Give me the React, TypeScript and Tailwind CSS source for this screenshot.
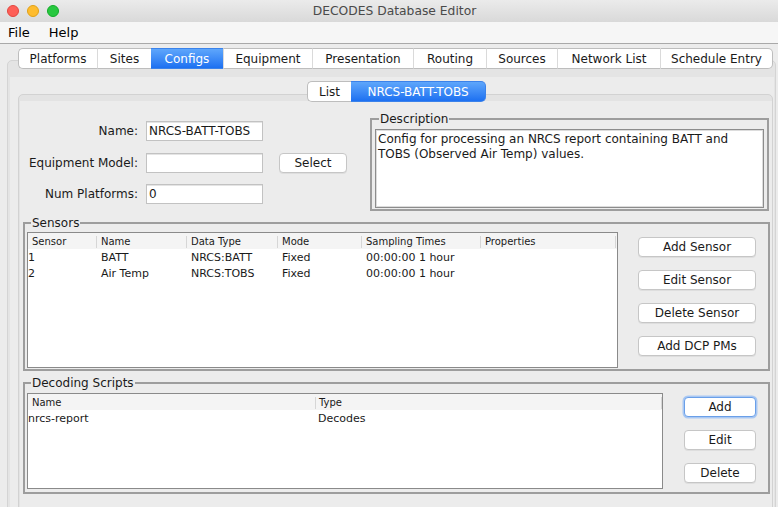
import React from 'react';

// DECODES Database Editor – Configs tab (macOS Aqua look)

const mainTabs = [
  { label: 'Platforms', w: 'w-[79px]' },
  { label: 'Sites', w: 'w-[54px]' },
  { label: 'Configs', w: 'w-[72px]', active: true },
  { label: 'Equipment', w: 'w-[89px]' },
  { label: 'Presentation', w: 'w-[101px]' },
  { label: 'Routing', w: 'w-[73px]' },
  { label: 'Sources', w: 'w-[71px]' },
  { label: 'Network List', w: 'w-[103px]' },
  { label: 'Schedule Entry', w: 'w-[113px]' },
];

const sensorCols = [
  { label: 'Sensor', w: 'w-[68px]' },
  { label: 'Name', w: 'w-[90px]' },
  { label: 'Data Type', w: 'w-[91px]' },
  { label: 'Mode', w: 'w-[84px]' },
  { label: 'Sampling Times', w: 'w-[119px]' },
  { label: 'Properties', w: 'w-[136px]' },
];

const sensors = [
  ['1', 'BATT', 'NRCS:BATT', 'Fixed', '00:00:00 1 hour', ''],
  ['2', 'Air Temp', 'NRCS:TOBS', 'Fixed', '00:00:00 1 hour', ''],
];

function Tab({ label, w, active, first, last }: { label: string; w: string; active?: boolean; first?: boolean; last?: boolean }) {
  return (
    <div
      className={[
        'flex h-full items-center justify-center text-[12px] leading-none border-y',
        w,
        active
          ? 'bg-gradient-to-b from-[#5ea6fb] to-[#1c70f1] text-white border-[#3b82ea]'
          : 'bg-white text-[#1a1a1a] border-[#bdbdbd]',
        first ? 'rounded-l-[5px] border-l' : '',
        last ? 'rounded-r-[5px] border-r' : '',
        !first && !active ? 'border-l border-l-[#dadada]' : '',
      ].join(' ')}
    >
      {label}
    </div>
  );
}

function MacButton({ children, w, focused }: { children: React.ReactNode; w: string; focused?: boolean }) {
  return (
    <button
      className={[
        'flex h-[20px] items-center justify-center rounded-[4px] bg-white text-[12px] leading-none text-[#1a1a1a]',
        w,
        focused
          ? 'border border-[#6a9fe8] shadow-[0_0_0_1.5px_#a9c8f3]'
          : 'border border-[#c6c6c6] shadow-[0_1px_0_rgba(0,0,0,0.06)]',
      ].join(' ')}
    >
      {children}
    </button>
  );
}

function FormRow({ label, value, children, mb }: { label: string; value: string; children?: React.ReactNode; mb: string }) {
  return (
    <div className={`flex h-[20px] items-center ${mb}`}>
      <div className="w-[115px] text-right text-[12px] text-[#1a1a1a]">{label}</div>
      <div className="ml-[8px] flex h-[20px] w-[117px] items-center border border-[#c2c2c2] bg-white pl-[2px] text-[12px] text-[#1a1a1a] shadow-[inset_0_1px_0_#e4e4e4]">
        {value}
      </div>
      {children}
    </div>
  );
}

function Group({ title, className, children }: { title: string; className: string; children: React.ReactNode }) {
  return (
    <fieldset className={`border-2 border-[#9d9d9d] ${className}`}>
      <legend className="ml-[4px] px-[1px] text-[12px] leading-[14px] text-[#1a1a1a]">{title}</legend>
      {children}
    </fieldset>
  );
}

export default function App() {
  return (
    <div className="flex h-[507px] w-[778px] flex-col overflow-hidden bg-[#ececec] font-['DejaVu_Sans',sans-serif] text-[#1a1a1a]">
      {/* Title bar */}
      <div className="relative flex h-[22px] shrink-0 items-center bg-gradient-to-b from-[#ebebeb] to-[#d9d9d9]">
        <div className="flex items-center gap-[8px] pl-[7px]">
          <span className="h-[12px] w-[12px] rounded-full border border-[#e2463f] bg-[#fe5f57]" />
          <span className="h-[12px] w-[12px] rounded-full border border-[#e1a116] bg-[#febc2e]" />
          <span className="h-[12px] w-[12px] rounded-full border border-[#12ac28] bg-[#28c840]" />
        </div>
        <div className="flex-1 pr-[48px] text-center text-[12.3px] text-[#4a4a4a]">DECODES Database Editor</div>
      </div>

      {/* Menu bar */}
      <div className="flex h-[22px] shrink-0 items-center gap-[19px] border-b border-[#a9a9a9] bg-[#f6f6f6] px-[8px] text-[13px] text-black">
        <span>File</span>
        <span>Help</span>
      </div>

      {/* Main tabbed pane */}
      <div className="flex-1 overflow-hidden pl-[7px] pr-[2px] pt-[4px]">
        <div className="relative z-10 ml-[11px] flex h-[21px] w-[755px]">
          {mainTabs.map((t, i) => (
            <Tab key={t.label} {...t} first={i === 0} last={i === mainTabs.length - 1} />
          ))}
        </div>
        <div className="-mt-[9px] h-[600px] rounded-[5px] border border-[#d4d4d4] bg-[#e4e4e4] pl-[2px] pr-[1px] pt-[16px]">
          <div className="h-full bg-[#ececec] pl-[8px] pt-[4px]">
            <div className="w-[755px]">
              {/* Sub tabs */}
              <div className="relative z-10 flex h-[21px] justify-center pl-[2px]">
                <Tab label="List" w="w-[44px]" first />
                <Tab label="NRCS-BATT-TOBS" w="w-[135px]" active last />
              </div>

              {/* Inner pane */}
              <div className="-mt-[8px] h-[600px] rounded-[5px] border border-[#d2d2d2] bg-[#e3e3e3] pl-[1px] pt-[6px]">
                <div className="h-full bg-[#ececec] pl-[3px] pr-[2px] pt-[11px]">
                  {/* Top section */}
                  <div className="flex items-start">
                    <div className="w-[347px] pt-[9px]">
                      <FormRow label="Name:" value="NRCS-BATT-TOBS" mb="mb-[12px]" />
                      <FormRow label="Equipment Model:" value="" mb="mb-[11px]">
                        <div className="ml-[16px]">
                          <MacButton w="w-[68px]">Select</MacButton>
                        </div>
                      </FormRow>
                      <FormRow label="Num Platforms:" value="0" mb="" />
                    </div>
                    <Group title="Description" className="flex h-[99px] w-[399px] flex-col px-[3px] pb-[1px]">
                      <div className="mt-[3px] flex-1 border border-[#8c8c8c] bg-white pl-[2px] pt-[2px] text-[12px] leading-[15px] shadow-[inset_0_0_0_1px_#dcdcdc]">
                        <div className="whitespace-nowrap">Config for processing an NRCS report containing BATT and</div>
                        <div className="whitespace-nowrap">TOBS (Observed Air Temp) values.</div>
                      </div>
                    </Group>
                  </div>

                  {/* Sensors */}
                  <Group title="Sensors" className="mt-[5px] flex h-[155px] w-[747px] pb-[1px] pl-[2px] pr-[12px]">
                    <div className="mt-[2px] flex w-full">
                      <div className="h-[136px] w-[591px] border border-[#8a8a8a] bg-white">
                        <div className="flex h-[16px] items-end bg-[#f4f4f4] pb-[1px]">
                          {sensorCols.map((c, i) => (
                            <div
                              key={c.label}
                              className={`flex h-[12px] items-center text-[10px] leading-none ${c.w} ${i === 0 ? 'pl-[4px]' : 'border-l border-[#d6d6d6] pl-[4px]'} ${i === sensorCols.length - 1 ? 'border-r' : ''}`}
                            >
                              {c.label}
                            </div>
                          ))}
                        </div>
                        {sensors.map((row) => (
                          <div key={row[0]} className="flex h-[16px] items-center text-[11px] leading-none">
                            {row.map((cell, i) => (
                              <div key={i} className={`${sensorCols[i].w} whitespace-nowrap ${i === 0 ? '' : 'pl-[5px]'}`}>
                                {cell}
                              </div>
                            ))}
                          </div>
                        ))}
                      </div>
                      <div className="ml-[20px] flex flex-col gap-[13px] pt-[5px]">
                        <MacButton w="w-[118px]">Add Sensor</MacButton>
                        <MacButton w="w-[118px]">Edit Sensor</MacButton>
                        <MacButton w="w-[118px]">Delete Sensor</MacButton>
                        <MacButton w="w-[118px]">Add DCP PMs</MacButton>
                      </div>
                    </div>
                  </Group>

                  {/* Decoding Scripts */}
                  <Group title="Decoding Scripts" className="mt-[5px] flex h-[118px] w-[747px] pb-[3px] pl-[2px] pr-[12px]">
                    <div className="mt-[3px] flex w-full">
                      <div className="h-[96px] w-[636px] border border-[#8a8a8a] bg-white">
                        <div className="flex h-[16px] items-end bg-[#f4f4f4] pb-[1px]">
                          <div className="flex h-[12px] w-[287px] items-center pl-[4px] text-[10px] leading-none">Name</div>
                          <div className="flex h-[12px] w-[347px] items-center border-x border-[#d6d6d6] pl-[3px] text-[10px] leading-none">Type</div>
                        </div>
                        <div className="flex h-[17px] items-center text-[11px] leading-none">
                          <div className="w-[287px]">nrcs-report</div>
                          <div className="pl-[3px]">Decodes</div>
                        </div>
                      </div>
                      <div className="ml-[21px] flex flex-col gap-[13px] pt-[4px]">
                        <MacButton w="w-[72px]" focused>Add</MacButton>
                        <MacButton w="w-[72px]">Edit</MacButton>
                        <MacButton w="w-[72px]">Delete</MacButton>
                      </div>
                    </div>
                  </Group>
                </div>
              </div>
            </div>
          </div>
        </div>
      </div>
    </div>
  );
}
